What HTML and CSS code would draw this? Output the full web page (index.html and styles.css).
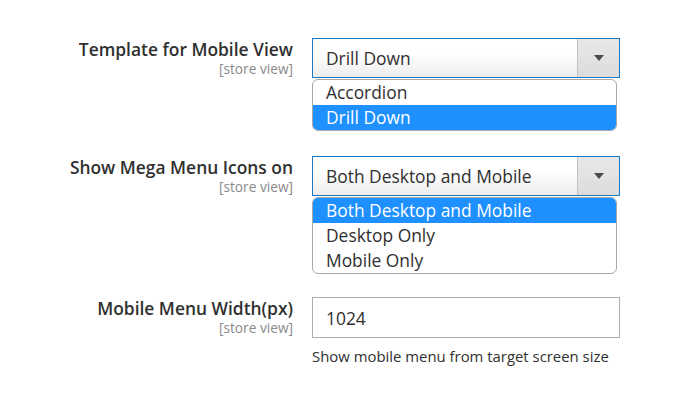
FILE: index.html
```html
<!DOCTYPE html>
<html lang="en">
<head>
    <meta charset="UTF-8">
    <meta name="viewport" content="width=device-width, initial-scale=1.0">
    <title>Mobile Menu Settings</title>
    <link rel="stylesheet" href="styles.css">
</head>
<body>
    <div class="config">
        <div class="field">
            <div class="field-label">
                <label>Template for Mobile View</label>
                <span class="scope">[store view]</span>
            </div>
            <div class="control">
                <div class="select">
                    <span class="select-value">Drill Down</span>
                    <span class="select-arrow"></span>
                </div>
                <ul class="options">
                    <li>Accordion</li>
                    <li class="selected">Drill Down</li>
                </ul>
            </div>
        </div>
        <div class="field">
            <div class="field-label">
                <label>Show Mega Menu Icons on</label>
                <span class="scope">[store view]</span>
            </div>
            <div class="control">
                <div class="select">
                    <span class="select-value">Both Desktop and Mobile</span>
                    <span class="select-arrow"></span>
                </div>
                <ul class="options">
                    <li class="selected">Both Desktop and Mobile</li>
                    <li>Desktop Only</li>
                    <li>Mobile Only</li>
                </ul>
            </div>
        </div>
        <div class="field">
            <div class="field-label">
                <label>Mobile Menu Width(px)</label>
                <span class="scope">[store view]</span>
            </div>
            <div class="control">
                <input type="text" class="text-input" value="1024">
                <p class="note">Show mobile menu from target screen size</p>
            </div>
        </div>
    </div>
</body>
</html>
```

FILE: styles.css
```css
body { margin: 0; font-family: "Open Sans", sans-serif; color: #303030; background: #fff; }
.config { padding-top: 38px; }
.field { display: grid; grid-template-columns: 293px 308px; column-gap: 19px; margin-bottom: 25px; }
.field:nth-child(2) { margin-bottom: 23px; }
.field-label { display: flex; flex-direction: column; align-items: flex-end; text-align: right; }
.field-label label { font-size: 17.4px; font-weight: 600; line-height: 22px; }
.scope { font-size: 13.7px; color: #8a8a8a; line-height: 18px; }
.control { display: flex; flex-direction: column; }
.select { display: flex; height: 40px; box-sizing: border-box; border: 1px solid #1979c3; background: linear-gradient(#fff 40%, #ececec); }
.select-value { flex: 1; padding-left: 13px; font-size: 17.4px; line-height: 38px; }
.select-arrow { width: 41px; border-left: 1px solid #c2c2c2; background: linear-gradient(#e8e8e8, #dcdcdc); display: flex; align-items: center; justify-content: center; }
.select-arrow::after { content: ""; border-left: 5px solid transparent; border-right: 5px solid transparent; border-top: 6px solid #514943; }
.options { list-style: none; margin: 1px 0 0; padding: 0; width: 305px; box-sizing: border-box; border: 1px solid #a8a8a8; border-radius: 6px; overflow: hidden; background: #fff; }
.options li { height: 25px; line-height: 25px; padding-left: 13px; font-size: 17.4px; }
.options li.selected { background: #1e90ff; color: #fff; }
.text-input { height: 41px; box-sizing: border-box; border: 1px solid #adadad; padding: 0 13px; font-family: inherit; font-size: 17.4px; color: #303030; outline: none; }
.note { margin: 9px 0 0; font-size: 14.9px; line-height: 18px; }
```
